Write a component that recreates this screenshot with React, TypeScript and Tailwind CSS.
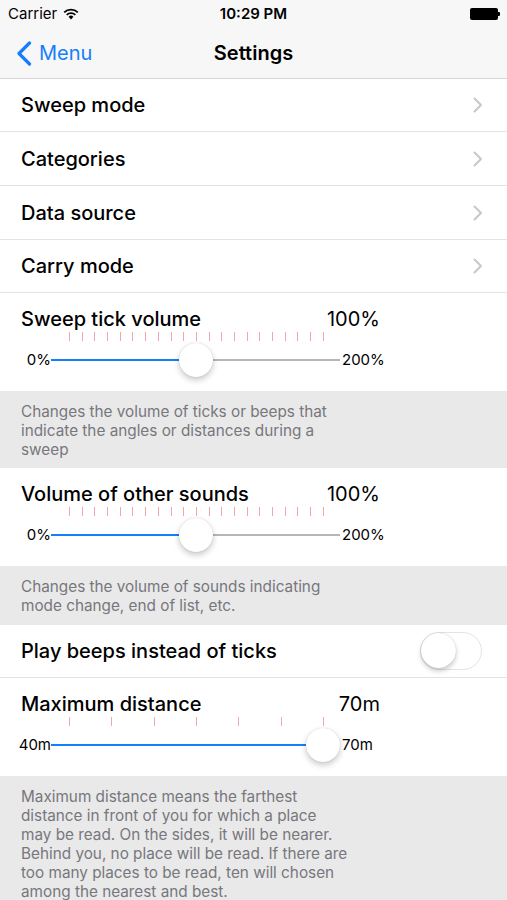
import React from "react";

const font = { fontFamily: "Inter, 'Noto Sans', sans-serif" };

function Chevron() {
  return (
    <svg width="10" height="16" viewBox="0 0 10 16" fill="none">
      <path d="M1.5 1.5 L8 8 L1.5 14.5" stroke="#c7c7cc" strokeWidth="2" strokeLinecap="round" strokeLinejoin="round" />
    </svg>
  );
}

function NavRow({ label, h }: { label: string; h: string }) {
  return (
    <div className={`${h} flex items-center pr-[24px] pl-[21px] border-b border-[#e3e3e6]`}>
      <span className="flex-1 text-[20px] font-medium text-black">{label}</span>
      <Chevron />
    </div>
  );
}

function Ticks({ count }: { count: number }) {
  return (
    <div className="ml-[69px] w-[255px] h-[10px] flex justify-between">
      {Array.from({ length: count }).map((_, i) => (
        <div key={i} className="w-px h-[9px] bg-[#f2a7ae]" />
      ))}
    </div>
  );
}

function SliderSection({
  title,
  value,
  min,
  max,
  pct,
  ticks,
}: {
  title: string;
  value: string;
  min: string;
  max: string;
  pct: number;
  ticks: number;
}) {
  return (
    <div className="h-[98px] pt-[13px] bg-white">
      <div className="flex items-center h-[26px] pl-[21px]">
        <span className="w-[298px] text-[20px] font-medium text-black">{title}</span>
        <span className="w-[61px] text-right text-[20px] text-black">{value}</span>
      </div>
      <Ticks count={ticks} />
      <div className="flex items-center h-[34px] mt-px">
        <span className="w-[51px] text-right text-[15px] text-black">{min}</span>
        <div className="relative w-[289px] h-[34px] flex items-center">
          <div className="h-[2px] bg-[#157efb]" style={{ width: `${pct * 100}%` }} />
          <div className="h-[2px] flex-1 bg-[#b6b6b6]" />
          <div
            className="absolute top-0 w-[34px] h-[34px] rounded-full bg-white shadow-[0_3px_6px_rgba(0,0,0,0.22),0_0_1px_rgba(0,0,0,0.2)]"
            style={{ left: `${pct * 255}px` }}
          />
        </div>
        <span className="ml-[2px] text-[15px] text-black">{max}</span>
      </div>
    </div>
  );
}

function Desc({ lines, h }: { lines: string[]; h: string }) {
  return (
    <div className={`bg-[#e9e9ea] pl-[21px] pt-[11px] overflow-hidden ${h}`}>
      {lines.map((l) => (
        <div key={l} className="text-[15.3px] leading-[19px] text-[#77777c] whitespace-nowrap">
          {l}
        </div>
      ))}
    </div>
  );
}

export default function App() {
  return (
    <div className="w-[507px] h-[900px] overflow-hidden bg-white" style={font}>
      <div className="bg-[#f7f7f7] border-b border-[#d6d6d8]">
        <div className="h-[28px] flex items-center pl-[8px] pr-[7px] relative">
          <span className="text-[15px] text-black">Carrier</span>
          <svg className="ml-[6px]" width="16" height="12" viewBox="0 0 16 12">
            <path d="M8 11.5 L5.6 8.8 A3.4 3.4 0 0 1 10.4 8.8 Z" fill="#000" />
            <path d="M3.7 6.9 A6.2 6.2 0 0 1 12.3 6.9" stroke="#000" strokeWidth="1.8" fill="none" />
            <path d="M1.2 4.3 A9.8 9.8 0 0 1 14.8 4.3" stroke="#000" strokeWidth="1.8" fill="none" />
          </svg>
          <span className="absolute left-0 right-0 text-center text-[15px] font-semibold text-black pointer-events-none">10:29 PM</span>
          <div className="ml-auto flex items-center">
            <div className="w-[28px] h-[12px] rounded-[2px] bg-black" />
            <div className="w-[2px] h-[4px] bg-black rounded-r-[1px]" />
          </div>
        </div>
        <div className="h-[50px] flex items-center relative">
          <div className="flex items-center pl-[16px]">
            <svg width="16" height="25" viewBox="0 0 16 25" fill="none">
              <path d="M13.5 2 L3 12.5 L13.5 23" stroke="#157efb" strokeWidth="3.2" strokeLinecap="round" strokeLinejoin="round" />
            </svg>
            <span className="ml-[7px] text-[20px] text-[#157efb]">Menu</span>
          </div>
          <span className="absolute left-0 right-0 text-center text-[20px] font-semibold text-black pointer-events-none">Settings</span>
        </div>
      </div>

      <NavRow label="Sweep mode" h="h-[53px]" />
      <NavRow label="Categories" h="h-[54px]" />
      <NavRow label="Data source" h="h-[54px]" />
      <NavRow label="Carry mode" h="h-[53px]" />

      <SliderSection title="Sweep tick volume" value="100%" min="0%" max="200%" pct={0.5} ticks={21} />
      <Desc
        h="h-[77px]"
        lines={[
          "Changes the volume of ticks or beeps that",
          "indicate the angles or distances during a",
          "sweep",
        ]}
      />

      <SliderSection title="Volume of other sounds" value="100%" min="0%" max="200%" pct={0.5} ticks={21} />
      <Desc h="h-[59px]" lines={["Changes the volume of sounds indicating", "mode change, end of list, etc."]} />

      <div className="h-[53px] flex items-center pl-[21px] border-b border-[#e3e3e6] bg-white">
        <span className="flex-1 text-[20px] font-medium text-black">Play beeps instead of ticks</span>
        <div className="mr-[25px] w-[62px] h-[38px] rounded-full border-[1.5px] border-[#e4e4e4] bg-white relative">
          <div className="absolute left-0 top-0 w-[35px] h-[35px] rounded-full bg-white shadow-[0_3px_5px_rgba(0,0,0,0.2),0_0_1px_rgba(0,0,0,0.25)]" />
        </div>
      </div>

      <SliderSection title="Maximum distance" value="70m" min="40m" max="70m" pct={1} ticks={7} />
      <Desc
        h="h-[124px]"
        lines={[
          "Maximum distance means the farthest",
          "distance in front of you for which a place",
          "may be read. On the sides, it will be nearer.",
          "Behind you, no place will be read. If there are",
          "too many places to be read, ten will chosen",
          "among the nearest and best.",
        ]}
      />
    </div>
  );
}
